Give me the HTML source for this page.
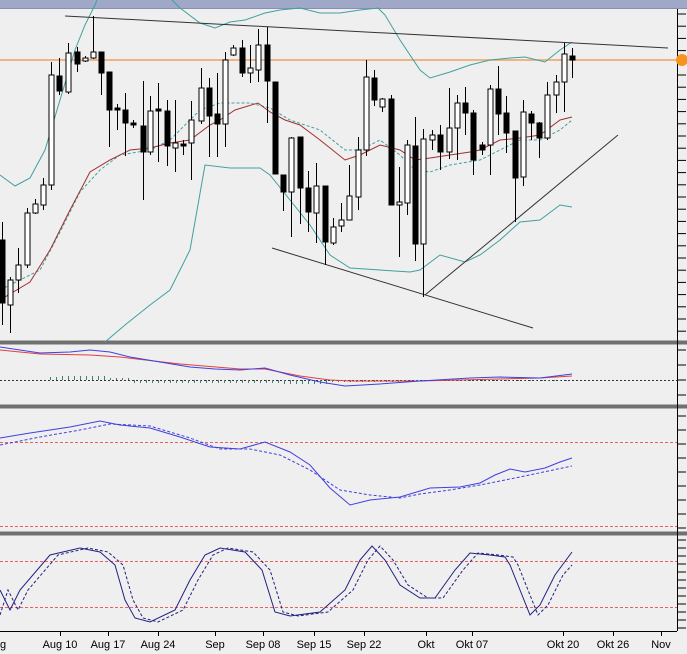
<!DOCTYPE html>
<html><head><meta charset="utf-8"><style>
html,body{margin:0;padding:0;background:#efefef;width:687px;height:654px;overflow:hidden}
svg{display:block}
text{font-family:"Liberation Sans",sans-serif;font-size:11px;fill:#000}
</style></head><body>
<svg id="s" width="687" height="654" xmlns="http://www.w3.org/2000/svg">
<rect x="0" y="0" width="687" height="654" fill="#efefef"/>
<rect x="0" y="0" width="687" height="8" fill="#a0a8c8"/>
<line x1="0" y1="8.5" x2="687" y2="8.5" stroke="#8890b0"/>
<g id="g"></g>
</svg>
<script>
var g=document.getElementById('g');var h='';
function pl(pts,c,w,d){h+='<polyline fill="none" stroke="'+c+'" stroke-width="'+(w||1)+'"'+(d?' stroke-dasharray="'+d+'"':'')+' points="'+pts+'"/>';}
function ln(a,b,c,d,col,w,da){h+='<line x1="'+a+'" y1="'+b+'" x2="'+c+'" y2="'+d+'" stroke="'+col+'" stroke-width="'+(w||1)+'"'+(da?' stroke-dasharray="'+da+'"':'')+'/>';}
[[342.5],[406.5],[533.5]].forEach(function(y){h+='<rect x="0" y="'+(y[0]-2)+'" width="687" height="4" fill="#707070"/>';});
ln(677.5,9,677.5,631,'#000');
for(var y=14;y<341;y+=12.2)ln(678,y,686,y,'#000');
for(var y=350;y<405;y+=15)ln(678,y,686,y,'#000');
for(var y=416;y<532;y+=14)ln(678,y,686,y,'#000');
for(var y=540;y<630;y+=8)ln(678,y,686,y,'#000');
ln(0,631.5,677,631.5,'#000');
var L=[["g",0],["Aug 10",60],["Aug 17",108],["Aug 24",158],["Sep",215],["Sep 08",263],["Sep 15",314],["Sep 22",364],["Okt",426],["Okt 07",472],["Okt 20",563],["Okt 26",613],["Nov",661]];
L.forEach(function(l){if(l[1]>0)ln(l[1]+.5,631,l[1]+.5,636,'#000');h+='<text x="'+l[1]+'" y="648" text-anchor="'+(l[1]?'middle':'start')+'">'+l[0]+'</text>';});
ln(0,60,677,60,'#f0a060',1.5);
h+='<circle cx="682" cy="60" r="6" fill="#f7941d"/>';
pl("0,175 15,186 30,178 45,150 60,100 75,50 85,25 95,5 97,0",'#40a0a0');
pl("172,0 180,8 200,23 215,28 230,22 245,20 265,13 280,10 300,8 320,13 340,13 360,10 378,8 385,15 400,40 420,70 430,78 450,72 470,65 490,60 510,58 525,57 545,62 560,50 572,42",'#40a0a0');
pl("105,342 125,325 150,305 170,290 190,250 205,165 230,168 260,168 270,175 290,200 310,225 330,255 350,268 380,270 410,272 420,270 440,255 465,262 480,255 500,240 520,222 540,220 560,205 572,207",'#40a0a0');
pl("0,290 20,280 40,270 60,232 80,192 100,170 120,155 150,150 170,140 200,110 220,103 250,103 270,108 290,120 320,130 345,150 360,150 380,140 400,155 415,170 430,172 450,165 480,160 500,150 520,140 540,140 560,130 572,120",'#40a0a0',1,'3,2');
pl("0,300 30,282 50,250 70,210 90,172 110,160 130,150 150,148 170,143 190,140 210,125 220,120 235,110 258,103 270,112 285,120 300,125 320,140 345,160 360,155 380,145 400,150 415,160 430,158 450,155 470,152 480,150 500,140 520,138 540,135 560,120 572,117",'#a03030');
ln(65,16,668,48,'#333');
ln(272,248,533,328,'#333');
ln(425,295,618,135,'#333');
var C=[[2,222,325,240,303,1],[10,277,333,280,305,0],[18,248,293,265,280,0],[27,208,268,213,265,0],[35,199,214,204,213,0],[43,178,210,185,205,0],[51,62,190,75,185,0],[59,58,95,76,91,1],[68,43,94,53,92,0],[77,47,72,52,64,1],[85,56,62,58,61,0],[93,16,59,52,58,0],[101,52,95,52,73,1],[109,72,147,72,110,1],[117,104,130,108,110,1],[125,93,156,110,123,1],[133,120,128,123,125,1],[143,81,200,126,152,1],[150,96,155,111,152,0],[158,83,162,109,111,1],[167,100,166,111,146,1],[175,100,172,143,148,0],[183,140,155,144,146,1],[191,101,180,120,143,0],[201,68,124,88,121,0],[209,78,157,88,116,1],[217,73,157,114,124,1],[225,52,147,60,124,0],[233,45,56,48,55,0],[242,40,77,48,73,1],[250,45,83,68,73,0],[258,29,82,45,70,0],[267,27,123,45,81,1],[275,82,174,82,174,1],[283,175,211,175,192,1],[291,137,237,138,192,0],[300,137,224,137,188,1],[308,171,232,188,212,1],[316,163,243,186,213,0],[325,186,265,186,242,1],[333,218,245,227,243,0],[341,203,232,220,226,0],[349,165,220,196,220,0],[358,137,210,150,197,0],[366,60,156,77,150,0],[374,70,106,78,100,1],[382,98,112,99,107,0],[391,95,205,99,205,1],[399,167,257,202,205,0],[407,140,215,145,203,0],[415,117,261,146,244,1],[423,129,297,139,244,0],[432,130,150,135,140,0],[440,125,170,135,152,1],[449,88,159,128,152,0],[457,95,160,103,128,0],[465,87,135,103,113,1],[473,110,175,113,160,1],[482,142,155,145,150,1],[490,85,175,89,145,0],[498,66,135,89,114,1],[506,96,153,113,133,1],[515,131,222,131,178,1],[523,100,186,112,177,0],[531,111,140,114,123,1],[539,122,158,123,138,1],[547,82,140,95,138,0],[556,75,113,82,95,0],[564,43,112,54,82,0],[572,48,78,56,60,1]];
C.forEach(function(c){ln(c[0]+.5,c[1],c[0]+.5,c[2],'#000');var hh=Math.max(c[4]-c[3],2);h+='<rect x="'+(c[0]-2)+'" y="'+c[3]+'" width="5" height="'+hh+'" fill="'+(c[5]?'#000':'#fff')+'" stroke="#000" stroke-width="1"/>';});
ln(0,380.5,677,380.5,'#333',1,'2,2');
for(var x=50;x<570;x+=6){var v=x<100?-3:(x<170?-2:(x<220?0:(x<330?3:(x<400?2:1))));if(x>=60&&x<105)v=-4;if(x>=130&&x<230)v=3;if(x>=280&&x<330)v=4;if(v)ln(x+.5,380,x+.5,380+v,'#408070');}
pl("0,350 40,354 90,355 120,357 180,364 240,369 265,369 300,376 330,380 350,381 420,381 540,378 572,376",'#e04040');
pl("0,347 40,353 70,352 90,350 110,352 130,357 160,362 190,367 215,369 240,370 265,368 290,375 320,382 345,386 380,384 420,381 470,378 500,377 540,378 572,374",'#4040e0');
ln(0,442.5,677,442.5,'#e86060',1,'3,2');
ln(0,526.5,677,526.5,'#e86060',1,'3,2');
pl("0,438 30,433 70,427 100,421 120,425 150,428 180,437 210,447 240,449 265,442 290,452 310,465 330,488 350,505 370,500 400,497 430,488 460,487 480,483 495,475 510,469 525,472 545,468 560,462 572,458",'#4040e0');
pl("0,445 40,437 80,430 110,424 150,426 190,438 220,449 250,449 280,455 310,470 340,490 370,495 400,498 420,494 450,490 480,485 520,477 572,466",'#4040e0',1,'3,2');
ln(0,561.5,677,561.5,'#e86060',1,'3,2');
ln(0,607.5,677,607.5,'#e86060',1,'3,2');
var S="0,590 10,610 20,590 50,555 80,548 100,552 115,565 125,600 135,618 150,622 175,610 190,580 205,555 220,548 245,552 262,570 275,612 290,616 320,612 345,590 360,560 372,546 385,560 400,585 420,598 435,598 455,570 470,553 490,555 505,557 510,565 520,590 530,615 540,605 555,575 572,552";
pl(S,'#202080');
var D=S.split(' ').map(function(p){var a=p.split(',');return (+a[0]+8)+','+a[1];}).filter(function(p){return +p.split(',')[0]<=573;}).join(' ');
pl("0,615 "+D+" 572,565",'#202080',1,'3,2');
g.innerHTML=h;
</script>
</body></html>
